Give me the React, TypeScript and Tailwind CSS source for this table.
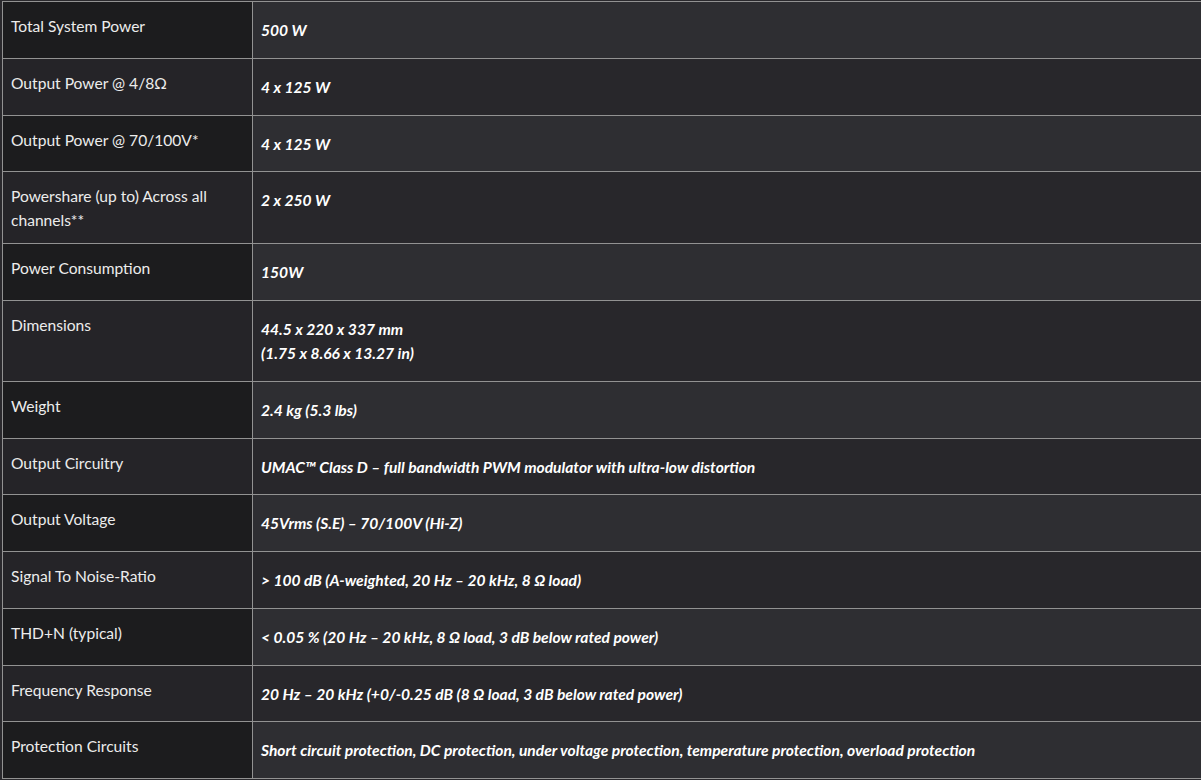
type Spec = {
  label: string;
  value: string[];
};

const specs: Spec[] = [
  { label: "Total System Power", value: ["500 W"] },
  { label: "Output Power @ 4/8Ω", value: ["4 x 125 W"] },
  { label: "Output Power @ 70/100V*", value: ["4 x 125 W"] },
  { label: "Powershare (up to) Across all channels**", value: ["2 x 250 W"] },
  { label: "Power Consumption", value: ["150W"] },
  { label: "Dimensions", value: ["44.5 x 220 x 337 mm", "(1.75 x 8.66 x 13.27 in)"] },
  { label: "Weight", value: ["2.4 kg (5.3 lbs)"] },
  { label: "Output Circuitry", value: ["UMAC™ Class D – full bandwidth PWM modulator with ultra-low distortion"] },
  { label: "Output Voltage", value: ["45Vrms (S.E) – 70/100V (Hi-Z)"] },
  { label: "Signal To Noise-Ratio", value: ["> 100 dB (A-weighted, 20 Hz – 20 kHz, 8 Ω load)"] },
  { label: "THD+N (typical)", value: ["< 0.05 % (20 Hz – 20 kHz, 8 Ω load, 3 dB below rated power)"] },
  { label: "Frequency Response", value: ["20 Hz – 20 kHz (+0/-0.25 dB (8 Ω load, 3 dB below rated power)"] },
  { label: "Protection Circuits", value: ["Short circuit protection, DC protection, under voltage protection, temperature protection, overload protection"] },
];

export default function App() {
  return (
    <div
      className="w-[1201px] h-[780px] overflow-hidden bg-[#2a292d] pl-[2px] pt-[1px]"
      style={{ fontFamily: "Lato, 'Open Sans', sans-serif" }}
    >
      <table className="w-[1210px] border-collapse text-[15.6px] leading-[24px] text-[#ececec]">
        <tbody>
          {specs.map((row, i) => {
            const odd = i % 2 === 0;
            return (
              <tr key={row.label}>
                <td
                  className={`w-[250px] align-top border border-[#929292] pl-[8px] pr-[20px] pt-[12px] pb-[11px] ${
                    odd ? "bg-[#1c1c1e]" : "bg-[#252428]"
                  }`}
                >
                  {row.label}
                </td>
                <td
                  className={`align-top border border-[#929292] pl-[8px] pt-[16px] pb-[15.75px] font-bold italic text-white ${
                    odd ? "bg-[#2e2e32]" : "bg-[#28272b]"
                  }`}
                >
                  {row.value.map((v) => (
                    <div key={v}>{v}</div>
                  ))}
                </td>
              </tr>
            );
          })}
        </tbody>
      </table>
    </div>
  );
}
